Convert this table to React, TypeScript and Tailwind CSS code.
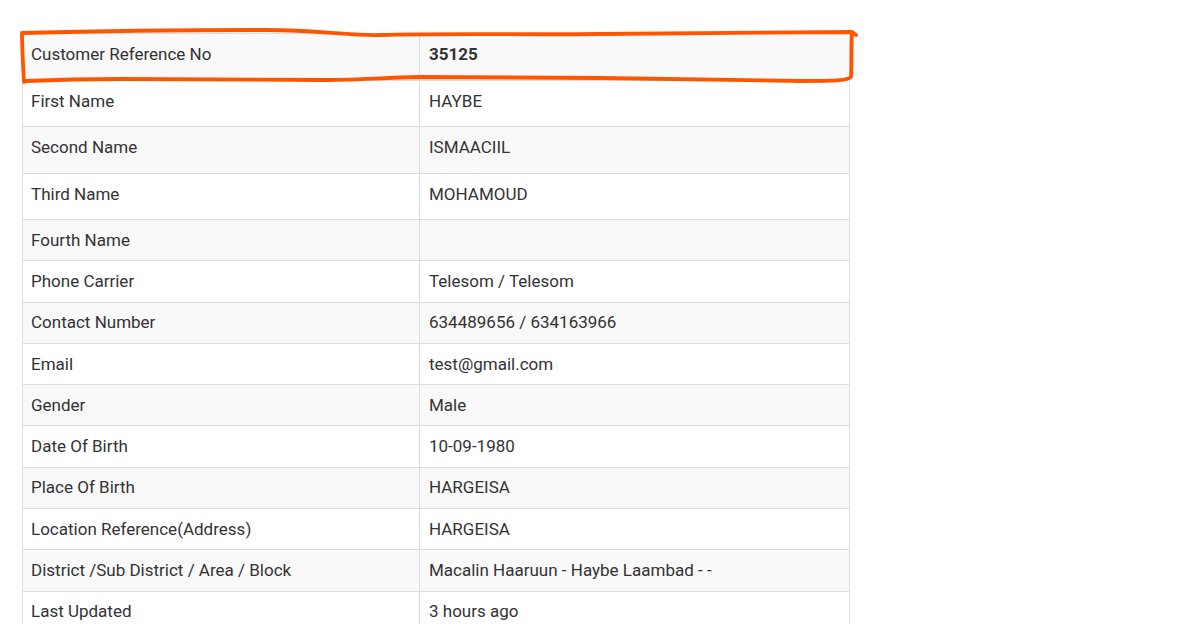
import React from "react";

const rows: [string, string, boolean?][] = [
  ["Customer Reference No", "35125", true],
  ["First Name", "HAYBE"],
  ["Second Name", "ISMAACIIL"],
  ["Third Name", "MOHAMOUD"],
  ["Fourth Name", ""],
  ["Phone Carrier", "Telesom / Telesom"],
  ["Contact Number", "634489656 / 634163966"],
  ["Email", "test@gmail.com"],
  ["Gender", "Male"],
  ["Date Of Birth", "10-09-1980"],
  ["Place Of Birth", "HARGEISA"],
  ["Location Reference(Address)", "HARGEISA"],
  ["District /Sub District / Area / Block", "Macalin Haaruun - Haybe Laambad - -"],
  ["Last Updated", "3 hours ago"],
];

export default function App() {
  return (
    <div
      className="relative w-[1199px] h-[624px] overflow-hidden bg-white text-[#333] text-[17px]"
      style={{ fontFamily: "Roboto, 'Liberation Sans', sans-serif" }}
    >
      <div className="pt-[33px] pl-[22px]">
        <table className="w-[828px] border-collapse table-fixed">
          <colgroup>
            <col className="w-[397px]" />
            <col />
          </colgroup>
          <tbody>
            {rows.map(([k, v, bold], i) => (
              <tr
                key={k}
                className={`${i % 2 === 0 ? "bg-[#f9f9f9]" : "bg-white"} ${
                  i < 4 ? "h-[46.5px]" : "h-[41.3px]"
                }`}
              >
                <td
                  className={`border border-[#dddddd] px-[8px] pt-0 align-middle leading-[20px] ${
                    i < 4 ? "pb-[5px]" : "pb-[1px]"
                  }`}
                >
                  {k}
                </td>
                <td
                  className={`border border-[#dddddd] px-[9px] pt-0 align-middle leading-[20px] ${
                    i < 4 ? "pb-[5px]" : "pb-[1px]"
                  } ${bold ? "font-bold" : ""}`}
                >
                  {v}
                </td>
              </tr>
            ))}
          </tbody>
        </table>
      </div>
      <svg
        className="absolute left-0 top-0 pointer-events-none"
        width="1199"
        height="624"
        viewBox="0 0 1199 624"
      >
        <path
          d="M24 82 C23 65 22 48 22 33 C100 31 200 30 265 30 C320 30 350 36 380 35 C450 33 520 35 600 34 C700 34 790 33 852 32 L856 35 M852 33 C851 50 852 65 851 77 C848 80 840 81 800 81 C740 80 680 79 600 78 C520 78 460 77 420 77 C380 78 350 80 320 80 C250 80 180 79 120 79 C80 79 50 80 26 81"
          fill="none"
          stroke="#ff5500"
          strokeWidth="3.8"
          strokeLinecap="round"
          strokeLinejoin="round"
        />
      </svg>
    </div>
  );
}
